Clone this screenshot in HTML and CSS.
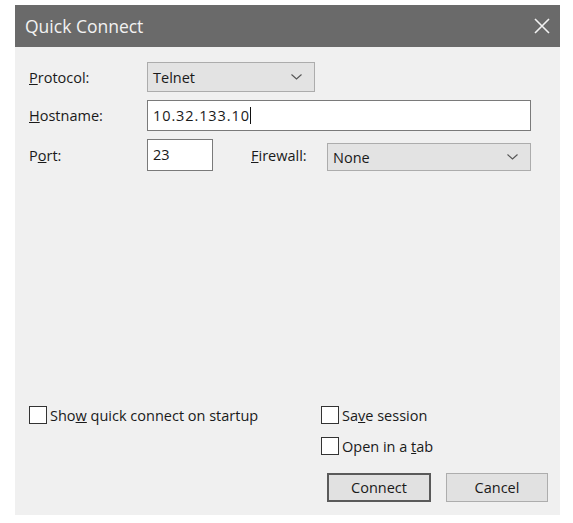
FILE: index.html
```html
<!DOCTYPE html>
<html>
<head>
<meta charset="utf-8">
<link rel="stylesheet" href="styles.css">
</head>
<body>
<div class="dialog">
  <div class="titlebar">
    <span class="title">Quick Connect</span>
    <svg class="close" width="16" height="16" viewBox="0 0 16 16"><path d="M1 1L15 15M15 1L1 15" stroke="#f2f2f2" stroke-width="1.6" fill="none"/></svg>
  </div>
  <div class="content">
    <div class="form">
      <div class="row r1">
        <span class="label"><u>P</u>rotocol:</span>
        <div class="select proto"><span>Telnet</span><svg class="chev" width="11" height="6" viewBox="0 0 11 6"><path d="M0.5 0.5L5.5 5L10.5 0.5" stroke="#555" stroke-width="1.1" fill="none"/></svg></div>
      </div>
      <div class="row r2">
        <span class="label"><u>H</u>ostname:</span>
        <div class="input host"><span class="mono">10.32.133.10</span><span class="caret"></span></div>
      </div>
      <div class="row r3">
        <span class="label">P<u>o</u>rt:</span>
        <div class="input port"><span>23</span></div>
        <span class="label fw"><u>F</u>irewall:</span>
        <div class="select fwsel"><span>None</span><svg class="chev" width="11" height="6" viewBox="0 0 11 6"><path d="M0.5 0.5L5.5 5L10.5 0.5" stroke="#555" stroke-width="1.1" fill="none"/></svg></div>
      </div>
    </div>
    <div class="bottom">
      <div class="leftcol">
        <div class="check"><span class="box"></span><span>Sho<u>w</u> quick connect on startup</span></div>
      </div>
      <div class="rightcol">
        <div class="check"><span class="box"></span><span>Sa<u>v</u>e session</span></div>
        <div class="check"><span class="box"></span><span>Open in a <u>t</u>ab</span></div>
        <div class="buttons">
          <div class="btn default">Connect</div>
          <div class="btn">Cancel</div>
        </div>
      </div>
    </div>
  </div>
</div>
</body>
</html>
```
FILE: styles.css
```css
html, body {
  margin: 0;
  padding: 0;
  background: #ffffff;
}
body {
  padding: 5px 0 0 15px;
  font-family: "Open Sans", "Noto Sans", sans-serif;
  font-size: 14.5px;
  color: #1a1a1a;
}
.dialog {
  width: 545px;
  height: 510px;
  display: flex;
  flex-direction: column;
  background: #f0f0f0;
}
.titlebar {
  height: 42px;
  flex: none;
  background: #6a6a6a;
  display: flex;
  align-items: center;
  justify-content: space-between;
  padding: 0 10px 0 10px;
  box-sizing: border-box;
}
.title {
  color: #f2f2f2;
  font-size: 17.5px;
}
.content {
  flex: 1;
  display: flex;
  flex-direction: column;
  justify-content: space-between;
  padding: 15px 29px 13px 13px;
}
.form {
  display: flex;
  flex-direction: column;
  gap: 8px;
}
.row {
  display: flex;
  align-items: center;
}
.label {
  width: 119px;
  flex: none;
  padding-left: 1px;
  box-sizing: border-box;
}
.select {
  height: 30px;
  box-sizing: border-box;
  background: #e3e3e3;
  border: 1px solid #acacac;
  display: flex;
  align-items: center;
  justify-content: space-between;
  padding: 0 12px 0 5px;
}
.proto {
  width: 168px;
}
.input {
  background: #ffffff;
  border: 1px solid #7a7a7a;
  box-sizing: border-box;
  display: flex;
  align-items: center;
  padding: 0 5px;
}
.host {
  flex: 1;
  height: 31px;
}
.mono {
  letter-spacing: 0.9px;
}
.caret {
  width: 1px;
  height: 17px;
  background: #111;
  margin-left: 0;
}
.r3 {
  align-items: flex-end;
}
.r3 .label {
  align-self: center;
}
.port {
  width: 66px;
  height: 32px;
  align-items: flex-start;
  padding-top: 5px;
}
.fw {
  width: 76px;
  margin-left: 38px;
  padding-left: 0;
}
.fwsel {
  flex: 1;
  height: 28px;
}
.bottom {
  display: flex;
  align-items: flex-start;
  margin-right: -17px;
}
.leftcol {
  width: 293px;
  padding-left: 1px;
}
.rightcol {
  flex: 1;
  display: flex;
  flex-direction: column;
  gap: 13px;
}
.check {
  display: flex;
  align-items: center;
  height: 18px;
  gap: 3px;
}
.box {
  width: 18px;
  height: 18px;
  box-sizing: border-box;
  border: 1px solid #333;
  background: #ffffff;
  flex: none;
}
.buttons {
  display: flex;
  gap: 15px;
  margin-left: 6px;
  margin-top: 5px;
}
.btn {
  width: 102px;
  height: 29px;
  box-sizing: border-box;
  background: #e1e1e1;
  border: 1px solid #adadad;
  display: flex;
  align-items: center;
  justify-content: center;
}
.btn.default {
  width: 104px;
  border: 2px solid #5a5a5a;
}
```
